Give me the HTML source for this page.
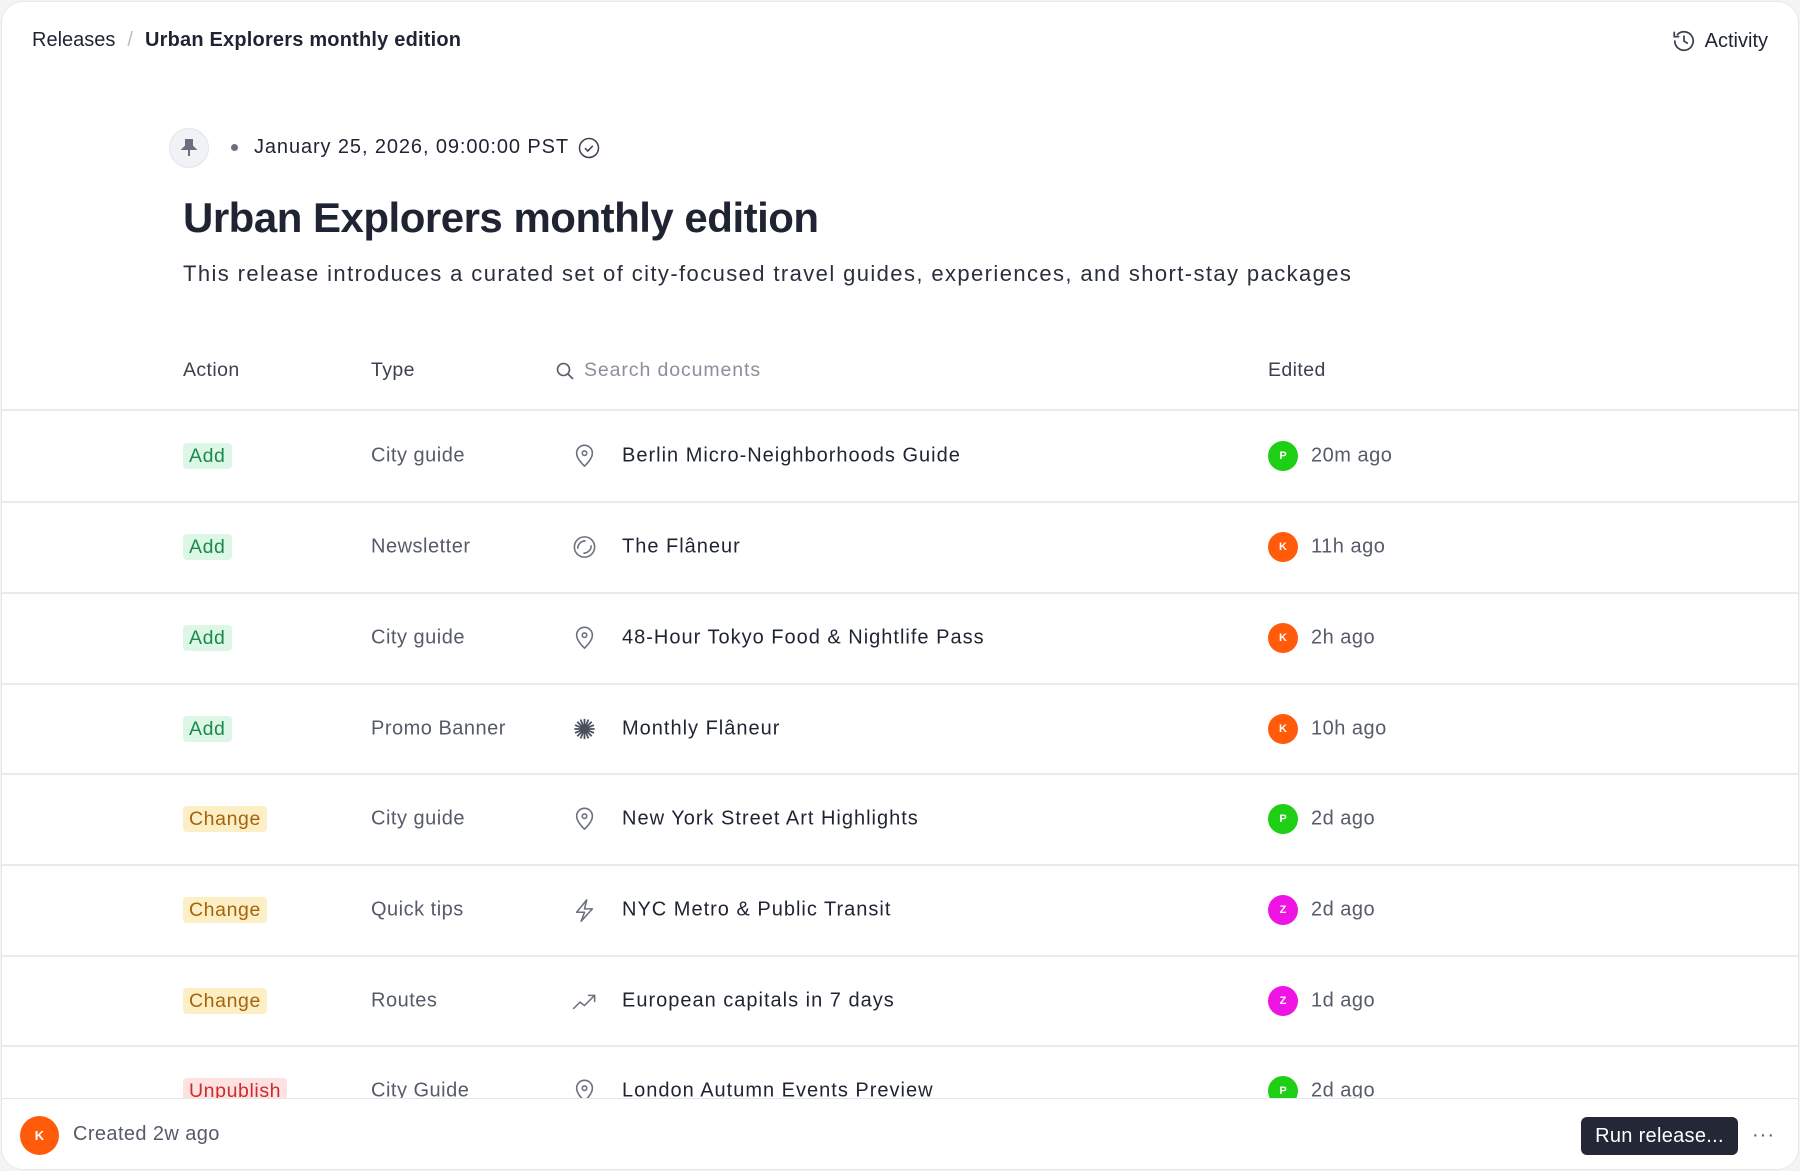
<!DOCTYPE html>
<html><head><meta charset="utf-8"><style>
*{box-sizing:border-box;margin:0;padding:0}
body{width:1800px;height:1171px;background:#f3f4f6;font-family:"Liberation Sans",sans-serif;color:#1f2433;overflow:hidden;position:relative}
.frame{position:absolute;left:1px;top:1px;width:1798px;height:1169px;background:#fff;border:1.5px solid #e6e7eb;border-radius:22px;overflow:hidden}
.abs{position:absolute}
.crumb{left:30px;top:27px;font-size:20px;color:#1f2433;white-space:nowrap}
.crumb .sep{color:#b8bcc6;margin:0 12px}
.crumb b{font-weight:600;letter-spacing:0.2px}
.act{right:30px;top:26px;font-size:20px;display:flex;align-items:center;gap:8px}
.pin{left:167px;top:126px;width:40px;height:40px;border-radius:50%;background:#f1f2f5;border:1px solid #e3e5ea;display:flex;align-items:center;justify-content:center}
.date{left:229px;top:134px;font-size:20px;display:flex;align-items:center;white-space:nowrap;letter-spacing:0.9px}
.date .dot{width:7px;height:7px;border-radius:50%;background:#6b7080;margin-right:16px}
h1{position:absolute;left:181px;top:192px;font-size:42px;font-weight:700;letter-spacing:-0.5px;white-space:nowrap}
.desc{left:181px;top:259px;font-size:22px;color:#2a2f3d;white-space:nowrap;letter-spacing:1.4px}
.th{top:357px;font-size:19.5px;color:#3c4150;letter-spacing:0.4px}
.hline{left:0;width:1800px;height:1.5px;background:#e9eaee}
.row{position:absolute;left:0;width:1800px;height:91px}
.row > *{position:absolute;top:50%;transform:translateY(-50%);white-space:nowrap}
.badge{left:181px;font-size:19.5px;padding:1px 6px;border-radius:4px;line-height:24px;letter-spacing:0.6px}
.add{background:#dcf7e6;color:#1c8a4c}
.chg{background:#fdefc5;color:#a5640c}
.unp{background:#fde2e2;color:#d12a2a}
.type{left:369px;font-size:20px;color:#555b69;letter-spacing:0.5px}
.ico{left:569px;width:27px;height:27px}
.name{left:620px;font-size:20px;color:#1f2433;letter-spacing:1px}
.av{left:1266px;width:30px;height:30px;border-radius:50%;color:#fff;font-size:11px;font-weight:700;display:flex;align-items:center;justify-content:center}
.P{background:#1fcf16}.K{background:#ff5b0b}.Z{background:#ee15e4}
.ed{left:1309px;font-size:20px;color:#555b69;letter-spacing:0.5px}
.footer{left:0;top:1096px;width:1800px;height:75px;background:#fff;border-top:1.5px solid #e6e7eb}
</style></head><body><div class="frame">
<div class="abs crumb">Releases<span class="sep">/</span><b>Urban Explorers monthly edition</b></div>
<div class="abs act"><svg width="26" height="26" viewBox="0 0 24 24" fill="none" stroke="#3c4150" stroke-width="1.6" stroke-linecap="round"><path d="M3.5 12a8.5 8.5 0 1 0 2.5-6"/><path d="M3 4v4h4"/><path d="M12 7.5V12l3 2"/></svg><span>Activity</span></div>
<div class="abs pin"><svg width="18" height="20" viewBox="0 0 18 20"><path d="M5 2h8M6 2v6l-3 3h12l-3-3V2M9 11v7" stroke="#6b7080" stroke-width="2" fill="#6b7080"/></svg></div>
<div class="abs date"><span class="dot"></span>January 25, 2026, 09:00:00 PST<svg style="margin-left:9px" width="22" height="22" viewBox="0 0 22 22" fill="none" stroke="#3c4150" stroke-width="1.5"><circle cx="11" cy="11" r="9.5"/><path d="M7 11.2l2.8 2.8 5-5.2"/></svg></div>
<h1>Urban Explorers monthly edition</h1>
<div class="abs desc">This release introduces a curated set of city-focused travel guides, experiences, and short-stay packages</div>
<div class="abs th" style="left:181px">Action</div>
<div class="abs th" style="left:369px">Type</div>
<div class="abs th" style="left:553px;color:#8a8f9c;display:flex;align-items:center;gap:9px;letter-spacing:0.9px"><svg width="20" height="20" viewBox="0 0 20 20" fill="none" stroke="#555b69" stroke-width="1.6"><circle cx="8.5" cy="8.5" r="6"/><path d="M13 13l5 5"/></svg>Search documents</div>
<div class="abs th" style="left:1266px">Edited</div>
<div class="abs hline" style="top:407px"></div>

<div class="row" style="top:408px"><span class="badge add">Add</span><span class="type">City guide</span><svg class="ico" viewBox="0 0 24 24" fill="none" stroke="#6b7080" stroke-width="1.4"><path d="M12 21s-7-6.2-7-11.5a7 7 0 0 1 14 0C19 14.8 12 21 12 21z"/><circle cx="12" cy="9.5" r="2"/></svg><span class="name">Berlin Micro-Neighborhoods Guide</span><span class="av P">P</span><span class="ed">20m ago</span></div>
<div class="abs hline" style="top:499px"></div>
<div class="row" style="top:499px"><span class="badge add">Add</span><span class="type">Newsletter</span><svg class="ico" viewBox="0 0 24 24" fill="none" stroke="#6b7080" stroke-width="1.4"><circle cx="12" cy="12" r="9"/><path d="M6 13.5c0-4 3-7 7-7M18 10.5c0 4-3 7-7 7"/></svg><span class="name">The Flâneur</span><span class="av K">K</span><span class="ed">11h ago</span></div>
<div class="abs hline" style="top:590px"></div>
<div class="row" style="top:590px"><span class="badge add">Add</span><span class="type">City guide</span><svg class="ico" viewBox="0 0 24 24" fill="none" stroke="#6b7080" stroke-width="1.4"><path d="M12 21s-7-6.2-7-11.5a7 7 0 0 1 14 0C19 14.8 12 21 12 21z"/><circle cx="12" cy="9.5" r="2"/></svg><span class="name">48-Hour Tokyo Food &amp; Nightlife Pass</span><span class="av K">K</span><span class="ed">2h ago</span></div>
<div class="abs hline" style="top:681px"></div>
<div class="row" style="top:681px"><span class="badge add">Add</span><span class="type">Promo Banner</span><svg class="ico" viewBox="0 0 24 24" fill="none" stroke="#4a4f5e" stroke-width="1.6"><path d="M12 3v18M3 12h18M5.6 5.6l12.8 12.8M18.4 5.6L5.6 18.4M8.5 3.6l7 16.8M15.5 3.6l-7 16.8M3.6 8.5l16.8 7M20.4 8.5l-16.8 7"/></svg><span class="name">Monthly Flâneur</span><span class="av K">K</span><span class="ed">10h ago</span></div>
<div class="abs hline" style="top:771px"></div>
<div class="row" style="top:771px"><span class="badge chg">Change</span><span class="type">City guide</span><svg class="ico" viewBox="0 0 24 24" fill="none" stroke="#6b7080" stroke-width="1.4"><path d="M12 21s-7-6.2-7-11.5a7 7 0 0 1 14 0C19 14.8 12 21 12 21z"/><circle cx="12" cy="9.5" r="2"/></svg><span class="name">New York Street Art Highlights</span><span class="av P">P</span><span class="ed">2d ago</span></div>
<div class="abs hline" style="top:862px"></div>
<div class="row" style="top:862px"><span class="badge chg">Change</span><span class="type">Quick tips</span><svg class="ico" viewBox="0 0 24 24" fill="none" stroke="#6b7080" stroke-width="1.4" stroke-linejoin="round"><path d="M14 3L5 14h7l-3 8 10-11h-7l2-8z"/></svg><span class="name">NYC Metro &amp; Public Transit</span><span class="av Z">Z</span><span class="ed">2d ago</span></div>
<div class="abs hline" style="top:953px"></div>
<div class="row" style="top:953px"><span class="badge chg">Change</span><span class="type">Routes</span><svg class="ico" viewBox="0 0 24 24" fill="none" stroke="#6b7080" stroke-width="1.4"><path d="M2 19l6-6 4 3 9-9M15 7h6v6"/></svg><span class="name">European capitals in 7 days</span><span class="av Z">Z</span><span class="ed">1d ago</span></div>
<div class="abs hline" style="top:1043px"></div>
<div class="row" style="top:1043px"><span class="badge unp">Unpublish</span><span class="type">City Guide</span><svg class="ico" viewBox="0 0 24 24" fill="none" stroke="#6b7080" stroke-width="1.4"><path d="M12 21s-7-6.2-7-11.5a7 7 0 0 1 14 0C19 14.8 12 21 12 21z"/><circle cx="12" cy="9.5" r="2"/></svg><span class="name">London Autumn Events Preview</span><span class="av P">P</span><span class="ed">2d ago</span></div>

<div class="abs footer">
<div class="abs K" style="left:18px;top:17px;width:39px;height:39px;border-radius:50%;color:#fff;font-size:13px;font-weight:700;display:flex;align-items:center;justify-content:center">K</div>
<div class="abs" style="left:71px;top:24px;font-size:20px;color:#555b69;letter-spacing:0.4px">Created 2w ago</div>
<div class="abs" style="left:1579px;top:18px;width:157px;height:38px;border-radius:6px;background:#232736;color:#fff;font-size:20px;display:flex;align-items:center;justify-content:center;letter-spacing:0.3px">Run release...</div>
<div class="abs" style="left:1750px;top:25px;font-size:20px;color:#555b69;letter-spacing:1px">···</div>
</div>
</div></body></html>
